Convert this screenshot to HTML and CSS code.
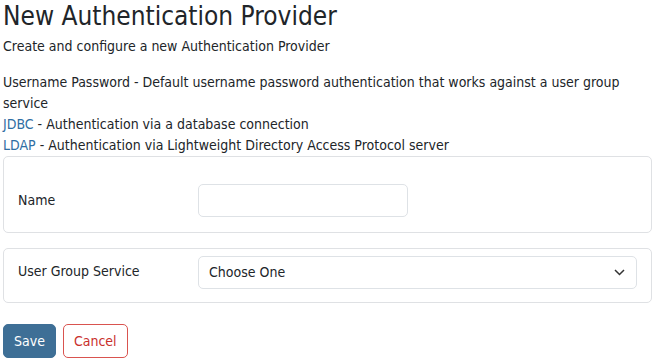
FILE: index.html
```html
<!DOCTYPE html>
<html lang="en">
<head>
    <meta charset="UTF-8">
    <title>New Authentication Provider</title>
    <link rel="stylesheet" href="styles.css">
</head>
<body>
    <div class="page">
        <h1>New Authentication Provider</h1>
        <p class="subtitle">Create and configure a new Authentication Provider</p>

        <ul class="providers">
            <li>Username Password - Default username password authentication that works against a user group service</li>
            <li><a href="#">JDBC</a> - Authentication via a database connection</li>
            <li><a href="#">LDAP</a> - Authentication via Lightweight Directory Access Protocol server</li>
        </ul>

        <div class="card card-name">
            <label class="field-label" for="name">Name</label>
            <input type="text" id="name" class="field-input">
        </div>

        <div class="card card-group">
            <label class="field-label" for="group">User Group Service</label>
            <div class="select-wrap">
                <select id="group" class="field-select">
                    <option>Choose One</option>
                </select>
                <svg class="chevron" width="11" height="7" viewBox="0 0 11 7">
                    <path d="M1 1 L5.5 5.5 L10 1" fill="none" stroke="#333" stroke-width="1.5"/>
                </svg>
            </div>
        </div>

        <div class="actions">
            <button class="btn btn-save">Save</button>
            <button class="btn btn-cancel">Cancel</button>
        </div>
    </div>
</body>
</html>
```

FILE: styles.css
```css
* {
    margin: 0;
    padding: 0;
    box-sizing: border-box;
}

body {
    font-family: "DejaVu Sans Condensed", "DejaVu Sans", sans-serif;
    font-size: 14px;
    line-height: 21px;
    color: #212529;
    background: #fff;
}

.page {
    padding: 0 4px 0 3px;
}

h1 {
    font-size: 26px;
    font-weight: normal;
    line-height: 32px;
}

.subtitle {
    margin-top: 4px;
}

.providers {
    list-style: none;
    margin-top: 15px;
}

.providers a {
    color: #2f6ea3;
    text-decoration: none;
}

.card {
    display: flex;
    border: 1px solid #dfe1e4;
    border-radius: 5px;
    padding: 0 14px;
}

.card-name {
    height: 77px;
    align-items: center;
    padding-top: 12px;
}

.card-group {
    margin-top: 15px;
    height: 55px;
    align-items: flex-start;
    padding-top: 7px;
}

.field-label {
    width: 180px;
    flex-shrink: 0;
}

.card-group .field-label {
    padding-top: 5px;
}

.field-input {
    width: 210px;
    height: 33px;
    border: 1px solid #dee2e6;
    border-radius: 5px;
    font: inherit;
}

.select-wrap {
    position: relative;
    width: 441px;
}

.field-select {
    width: 100%;
    height: 33px;
    appearance: none;
    -webkit-appearance: none;
    background: #fff;
    border: 1px solid #dee2e6;
    border-radius: 5px;
    font: inherit;
    color: #212529;
    padding: 0 10px;
}

.chevron {
    position: absolute;
    right: 12px;
    top: 13px;
    pointer-events: none;
}

.actions {
    display: flex;
    gap: 7px;
    margin-top: 21px;
}

.btn {
    font: inherit;
    height: 34px;
    border-radius: 5px;
    padding: 0 10px;
    cursor: pointer;
}

.btn-save {
    background: #3e6f96;
    border: 1px solid #3e6f96;
    color: #fff;
}

.btn-cancel {
    background: #fff;
    border: 1px solid #d9534f;
    color: #c9302c;
}
```
